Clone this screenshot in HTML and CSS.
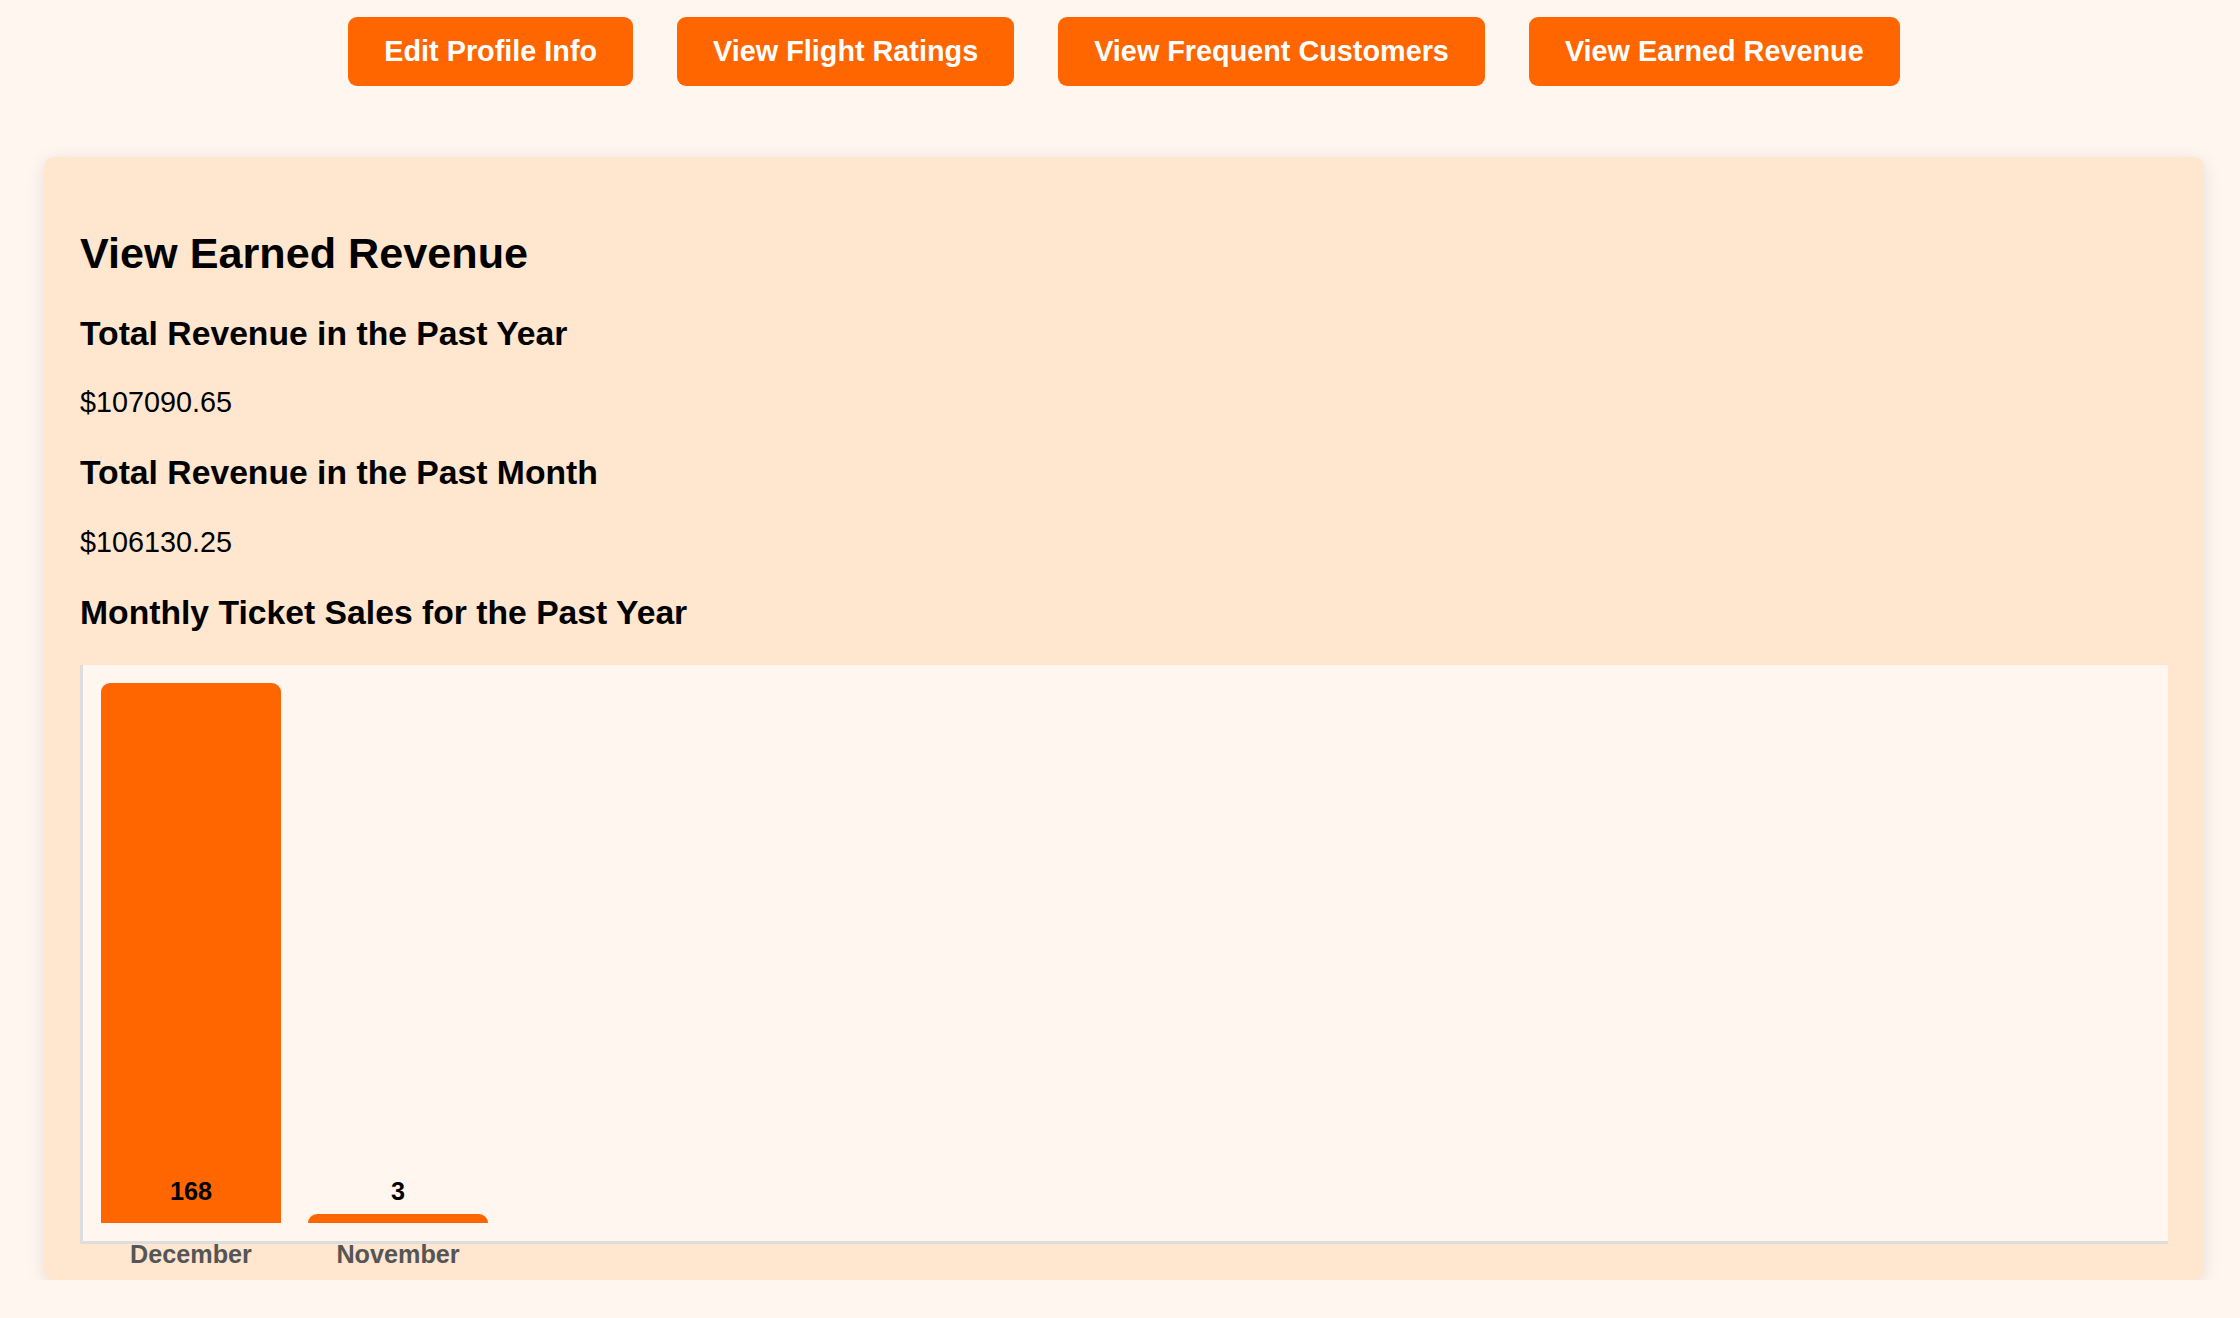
FILE: index.html
```html
<!DOCTYPE html>
<html lang="en">
<head>
<meta charset="utf-8">
<title>View Earned Revenue</title>
<link rel="stylesheet" href="styles.css">
</head>
<body>
<div class="page">
  <nav class="nav">
    <button class="nav-btn">Edit Profile Info</button>
    <button class="nav-btn">View Flight Ratings</button>
    <button class="nav-btn">View Frequent Customers</button>
    <button class="nav-btn">View Earned Revenue</button>
  </nav>
  <section class="card">
    <h2 class="title">View Earned Revenue</h2>
    <h3 class="subtitle">Total Revenue in the Past Year</h3>
    <p class="amount">$107090.65</p>
    <h3 class="subtitle">Total Revenue in the Past Month</h3>
    <p class="amount">$106130.25</p>
    <h3 class="subtitle">Monthly Ticket Sales for the Past Year</h3>
    <div class="chart">
      <div class="bar" style="height:540px">
        <span class="bar-value">168</span>
        <span class="bar-month">December</span>
      </div>
      <div class="bar" style="height:9.64px">
        <span class="bar-value">3</span>
        <span class="bar-month">November</span>
      </div>
    </div>
  </section>
</div>
</body>
</html>
```

FILE: styles.css
```css
html, body {
  margin: 0;
  padding: 0;
}

body {
  background: #fff6ef;
  font-family: "Liberation Sans", Arial, sans-serif;
  font-size: 28.8px;
  color: #000;
}

.page {
  padding: 17px 36px 0 44px;
}

.nav {
  display: flex;
  justify-content: center;
  gap: 44px;
  margin-bottom: 71px;
}

.nav-btn {
  background: #ff6600;
  color: #fff;
  border: none;
  border-radius: 9px;
  padding: 18px 36px;
  font-family: "Liberation Sans", Arial, sans-serif;
  font-size: 28.8px;
  font-weight: bold;
  line-height: normal;
  cursor: pointer;
}

.card {
  background: #ffe6cf;
  border-radius: 10px;
  padding: 36px;
  box-shadow: 0 3.6px 18px rgba(0, 0, 0, 0.1);
}

.title {
  font-size: 43.2px;
  font-weight: bold;
  margin: 35.9px 0;
}

.subtitle {
  font-size: 33.7px;
  font-weight: bold;
  margin: 33.7px 0;
}

.amount {
  font-size: 28.8px;
  margin: 33.7px 0;
}

.chart {
  display: flex;
  align-items: flex-end;
  gap: 27px;
  height: 540px;
  padding: 18px;
  background: #fff6ef;
  border-left: 3.6px solid #dddddd;
  border-bottom: 3.6px solid #dddddd;
}

.bar {
  position: relative;
  width: 180px;
  flex: 0 0 180px;
  background: #ff6600;
  border-radius: 9px 9px 0 0;
}

.bar-value {
  position: absolute;
  left: 0;
  right: 0;
  bottom: 17px;
  text-align: center;
  font-size: 25.2px;
  font-weight: bold;
  color: #000;
}

.bar-month {
  position: absolute;
  left: 0;
  right: 0;
  top: calc(100% + 16.5px);
  text-align: center;
  font-size: 25.2px;
  font-weight: bold;
  color: #555555;
}
```
